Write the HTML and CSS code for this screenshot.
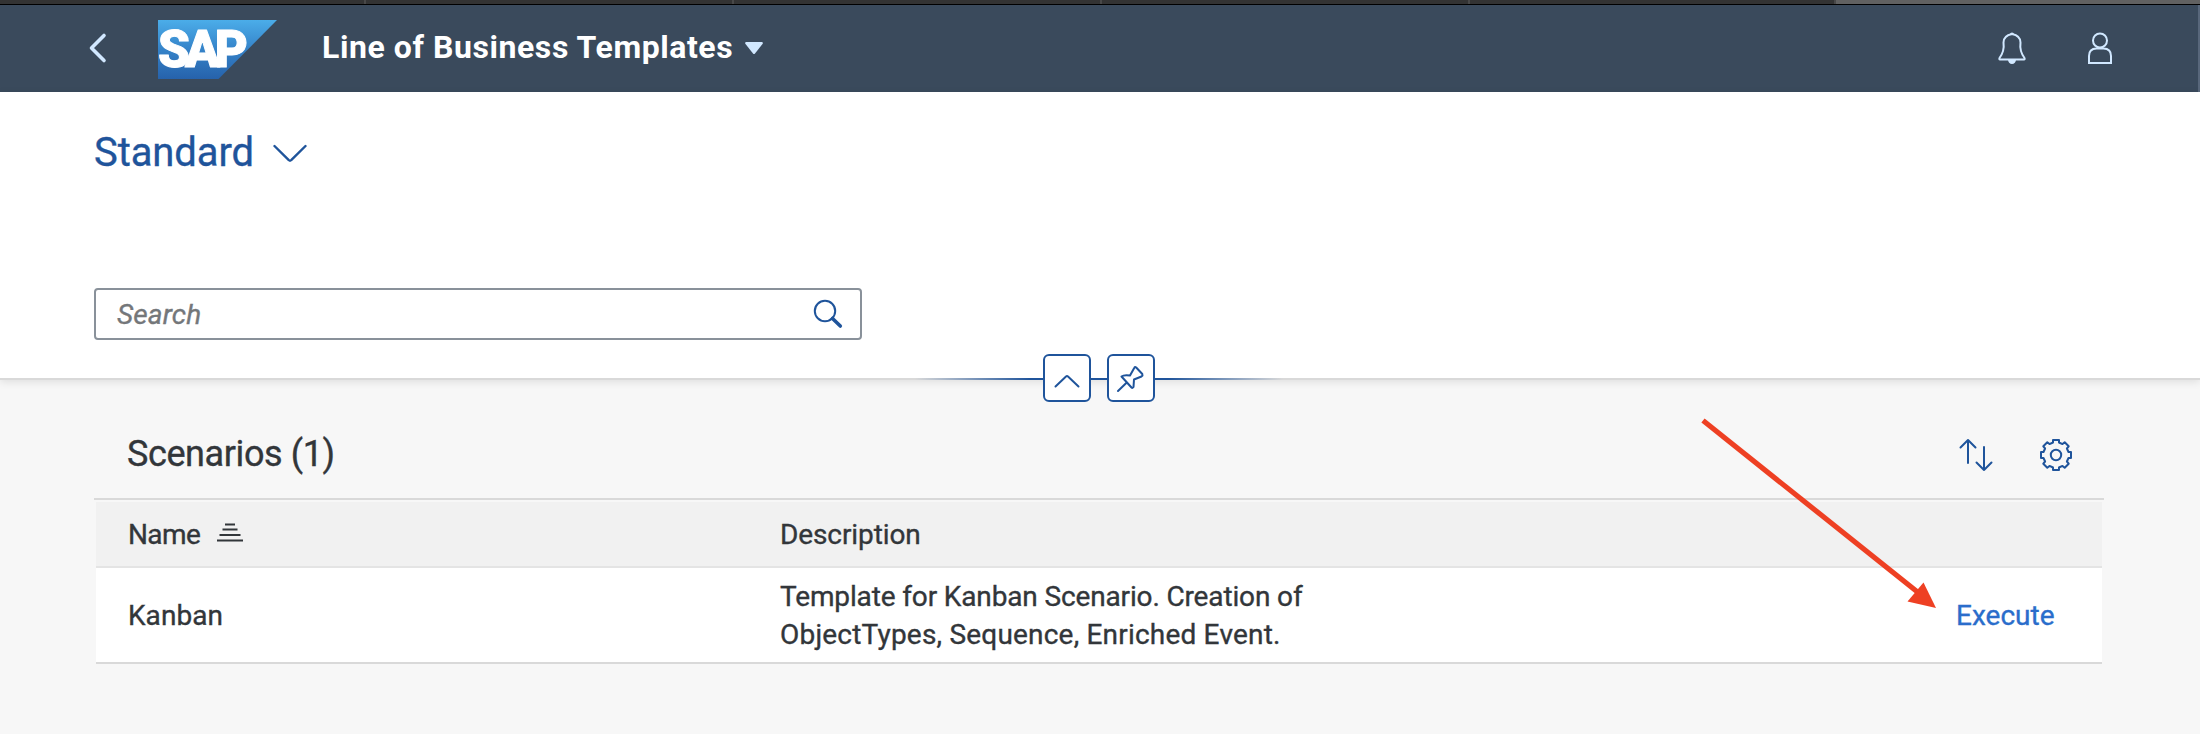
FILE: index.html
```html
<!DOCTYPE html>
<html lang="en">
<head>
<meta charset="utf-8">
<title>Line of Business Templates</title>
<link rel="stylesheet" href="styles.css">
</head>
<body>
<div class="tabstrip"><i></i><i></i><i></i><i></i><i></i><i class="active"></i></div>
<header class="shell">
  <svg class="back" width="20" height="32" viewBox="0 0 20 32"><path d="M16 3.500 3.500 16l12.500 12.500"/></svg>
  <svg class="logo" width="119" height="59" viewBox="0 0 119 59">
    <defs><linearGradient id="sap" x1="0" y1="0" x2="0" y2="1"><stop offset="0" stop-color="#4bade9"/><stop offset=".5" stop-color="#3583c9"/><stop offset="1" stop-color="#2662ab"/></linearGradient></defs>
    <path d="M0 0H119L60.500 59H0Z" fill="url(#sap)"/>
    <text x="0" y="47">SAP</text>
  </svg>
  <h1>Line of Business Templates</h1>
  <svg class="caret" width="18" height="12" viewBox="0 0 18 12"><path d="M1 0H17Q18.500 .5 17.500 2L10 11.500Q9 12.500 8 11.500L.5 2Q-.5 .5 1 0Z"/></svg>
  <div class="shell-actions">
    <svg width="28" height="33" viewBox="0 0 28 33"><path class="line" d="M14 2C9 3 5.500 5.500 5.500 10.500C6.500 18 4.500 22 1.500 26Q1 27.500 2 27.500H26Q27 27.500 26.500 26C23.500 22 21.500 18 22.500 10.500C22.500 5.500 19 3 14 2Z"/><path class="solid" d="M10 27.500a4 4.500 0 0 0 8 0ZM12 2.500a2 2 0 0 1 4 0Z"/></svg>
    <svg width="24" height="33" viewBox="0 0 24 33"><circle class="line" cx="12" cy="8.500" r="7"/><path class="line" stroke-linejoin="miter" d="M1 31V24Q1 16.500 8.500 16.500H15.500Q23 16.500 23 24V31Z"/></svg>
  </div>
</header>
<section class="filters">
  <div class="variant"><span>Standard</span>
    <svg width="34" height="20" viewBox="0 0 34 20"><path d="M1.500 2 15.800 16.200Q17 17.200 18.200 16.200L32.500 2"/></svg>
  </div>
  <div class="search"><span>Search</span>
    <svg width="30" height="30" viewBox="0 0 30 30"><circle cx="12" cy="12" r="10.200" stroke-width="2"/><path d="M19.500 19.500 27.300 27" stroke-width="3.600"/></svg>
  </div>
  <div class="toggle">
    <i class="fade left"></i>
    <button><svg width="26" height="14" viewBox="0 0 26 14"><path d="M1.500 12.500 12 2.500Q13 1.600 14 2.500L24.500 12.500"/></svg></button>
    <i class="link"></i>
    <button><svg width="44" height="44" viewBox="0 0 44 44"><path d="M9 35 17 27.300M12.500 20.500Q15 18.500 21 19.500L25.500 11.500Q26 10.500 27.200 11.500L33.300 18Q34 19.500 32.500 20.500L25 23.500L24.500 31Q23.500 32.500 22.500 31.500Z"/></svg></button>
    <i class="fade right"></i>
  </div>
</section>
<main>
  <div class="toolbar">
    <h2>Scenarios (1)</h2>
    <div class="tools">
      <svg width="34" height="34" viewBox="0 0 34 34"><path d="M9 25V2M1.500 9.500 9 2l7.500 7.500M25 9v23M17.500 24.500 25 32l7.500-7.500"/></svg>
      <svg width="34" height="34" viewBox="-17 -17 34 34"><circle r="5.200"/><path d="M-3-15H3V-12.500L6.500-10.900L8.700-12.700L12.700-8.700L10.900-6.500L12.500-3H15V3H12.500L10.900 6.500L12.700 8.700L8.700 12.700L6.500 10.900L3 12.500V15H-3V12.500L-6.500 10.900L-8.700 12.700L-12.700 8.700L-10.900 6.500L-12.500 3H-15V-3H-12.500L-10.900-6.500L-12.700-8.700L-8.700-12.700L-6.500-10.900L-3-12.500Z"/></svg>
    </div>
  </div>
  <div class="table">
    <div class="row head">
      <div><span class="name">Name</span><svg class="sorted" width="26" height="19" viewBox="0 0 26 19"><path d="M8 1.500h10M5.500 6.500h15M2.500 12h21M0 17.500h26"/></svg></div>
      <div>Description</div>
      <div></div>
    </div>
    <div class="row item">
      <div class="kanban">Kanban</div>
      <div class="desc"><span class="d1">Template for Kanban Scenario. Creation of</span><span class="d2">ObjectTypes, Sequence, Enriched Event.</span></div>
      <div><a>Execute</a></div>
    </div>
  </div>
</main>
<svg class="pointer" width="240" height="196" viewBox="0 0 240 196"><path d="M3 5.500 220 179" stroke="#ee4023" stroke-width="5.200"/><path d="M236 193 207.500 186.500 223.500 167.500Z" fill="#ee4023"/></svg>
</body>
</html>
```
FILE: styles.css
```css
* { box-sizing: border-box; }
body {
  margin: 0;
  height: 734px;
  overflow: hidden;
  background: #f7f7f7;
  color: #32363a;
  font-family: Roboto, "Liberation Sans", sans-serif;
  font-size: 28px;
  -webkit-text-stroke: .35px currentColor;
}
svg { display: block; flex: none; fill: none; stroke-linecap: round; stroke-linejoin: round; }
h1, h2 { margin: 0; }

.tabstrip {
  display: grid;
  grid-template-columns: 366px 368px 368px 368px 366px 1fr;
  height: 5px;
  background: #333;
  border-bottom: 1px solid #000;
}
.tabstrip i { border-right: 2px solid #484848; }
.tabstrip .active { background: #616161; border: 0; }

.shell {
  display: flex;
  align-items: flex-start;
  height: 87px;
  padding-left: 88px;
  background: #3a4a5c;
  border-right: 2px solid #58677b;
}
.back { margin-top: 27px; stroke: #d1e8ff; stroke-width: 3.600; }
.logo { margin: 15px 0 0 50px; }
.logo text { font: 900 51px Roboto, sans-serif; letter-spacing: -5px; fill: #fff; stroke: #fff; stroke-width: 1; }
.shell h1 {
  margin-left: 45px;
  font-size: 32px;
  font-weight: 700;
  line-height: 84px;
  letter-spacing: .57px;
  color: #fff;
  -webkit-text-stroke: 0;
}
.caret { margin: 37px 0 0 12px; fill: #d1e8ff; }
.shell-actions { display: flex; gap: 62px; margin: 27px 86px 0 auto; }
.shell-actions .line { stroke: #d1e8ff; stroke-width: 2; }
.shell-actions .solid { fill: #d1e8ff; }

.filters {
  position: relative;
  height: 288px;
  padding: 37px 94px 0;
  background: #fff;
  border-bottom: 2px solid #d9d9d9;
  box-shadow: 0 2px 8px rgba(0, 0, 0, .1);
}
.variant { display: flex; align-items: center; gap: 19px; height: 48px; font-size: 40px; line-height: 48px; letter-spacing: -.1px; color: #1f549b; }
.variant svg { stroke: #1f549b; stroke-width: 2.400; margin-top: 2px; }
.search {
  display: flex;
  align-items: center;
  justify-content: space-between;
  width: 768px;
  height: 52px;
  margin-top: 111px;
  padding: 0 17px 0 21px;
  border: 2px solid #89919a;
  border-radius: 4px;
  font-style: italic;
  letter-spacing: .15px;
  color: #74777a;
}
.search svg { stroke: #1f549b; }
.toggle {
  position: absolute;
  left: 915px;
  bottom: -24px;
  display: flex;
  align-items: center;
}
.toggle button {
  display: grid;
  place-items: center;
  width: 48px;
  height: 48px;
  padding: 0;
  background: #fff;
  border: 2px solid #1f549b;
  border-radius: 6px;
}
.toggle svg { stroke: #1f549b; stroke-width: 2; }
.toggle button:first-of-type svg { margin-top: 5px; }
.toggle i { height: 2px; margin-top: 2px; background: #1f549b; }
.toggle .fade { width: 128px; }
.toggle .left { background: linear-gradient(to left, #1f549b 10%, #d9d9d9); }
.toggle .link { width: 16px; }
.toggle .right { background: linear-gradient(to right, #1f549b 10%, #d9d9d9); }

main { padding: 28px 96px 0 94px; }
.toolbar {
  display: flex;
  align-items: center;
  justify-content: space-between;
  height: 92px;
  padding: 0 31px 0 33px;
  border-bottom: 2px solid #d9d9d9;
}
.toolbar h2 { font-size: 36px; font-weight: 400; letter-spacing: -.4px; margin-top: 2px; }
.tools { display: flex; gap: 46px; margin-top: 4px; }
.tools svg { stroke: #1f549b; stroke-width: 2; }
.table { margin: 2px 2px 0; }
.row { display: grid; grid-template-columns: 652px 1175px 1fr; align-items: center; padding-left: 32px; }
.head { height: 66px; background: #f1f1f1; border-bottom: 2px solid #e4e4e4; }
.head > div { display: flex; align-items: center; letter-spacing: -.1px; }
.head .name { width: 89px; letter-spacing: -.6px; }
.sorted { stroke: #32363a; stroke-width: 1.800; stroke-linecap: butt; margin-top: -3px; }
.item { height: 96px; padding-top: 1px; background: #fff; border-bottom: 2px solid #d9d9d9; line-height: 38px; }
.kanban { letter-spacing: .05px; }
.desc span { display: block; }
.d1 { letter-spacing: -.14px; }
.d2 { letter-spacing: .2px; }
.item a { color: #2a6dcb; margin-left: 1px; }

.pointer { position: absolute; left: 1700px; top: 415px; stroke-linecap: butt; }
```
